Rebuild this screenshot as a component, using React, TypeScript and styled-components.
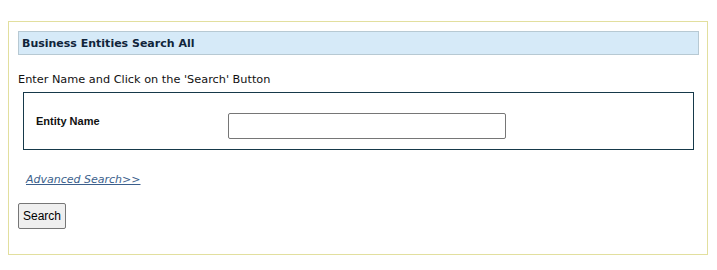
import styled, { createGlobalStyle } from "styled-components"

const GlobalStyle = createGlobalStyle`
    body {
        margin: 0;
        background: #ffffff;
        font-family: "DejaVu Sans", Verdana, sans-serif;
    }
`;

const App: React.FC = () => {
    return (
        <Page>
            <GlobalStyle />
            <Panel>
                <Header>Business Entities Search All</Header>
                <Instructions>Enter Name and Click on the 'Search' Button</Instructions>
                <SearchBox>
                    <Label>Entity Name</Label>
                    <NameInput type="text" />
                </SearchBox>
                <AdvancedLink href="#">Advanced Search&gt;&gt;</AdvancedLink>
                <SearchButton type="button">Search</SearchButton>
            </Panel>
        </Page>
    )
}

const Page = styled.div`
    padding: 21px 9px 0 8px;
`;

const Panel = styled.div`
    display: flex;
    flex-direction: column;
    align-items: flex-start;
    border: 1px solid #e2df9e;
    padding: 9px 8px 25px 9px;
    height: 198px;
`;

const Header = styled.div`
    box-sizing: border-box;
    align-self: stretch;
    height: 24px;
    padding: 0 3px;
    display: flex;
    align-items: center;
    background: #d6eaf8;
    border: 1px solid #b7c9d3;
    color: #10243a;
    font-size: 11px;
    font-weight: bold;
`;

const Instructions = styled.p`
    margin: 18px 0 0 0;
    font-size: 11.3px;
    color: #111;
`;

const SearchBox = styled.div`
    box-sizing: border-box;
    align-self: stretch;
    margin: 6px 5px 0 5px;
    height: 58px;
    display: flex;
    align-items: center;
    border: 1px solid #16394a;
    padding: 0 12px;
`;

const Label = styled.span`
    width: 192px;
    font-family: "Liberation Sans", Arial, sans-serif;
    font-size: 11px;
    font-weight: bold;
    color: #111;
`;

const NameInput = styled.input`
    box-sizing: border-box;
    width: 278px;
    height: 26px;
    margin-top: 10px;
    border: 1px solid #767676;
    border-radius: 2px;
    padding: 1px 2px;
`;

const AdvancedLink = styled.a`
    margin: 23px 0 0 8px;
    font-size: 11px;
    font-style: italic;
    color: #3c5f8c;
    text-decoration: underline;
`;

const SearchButton = styled.button`
    margin-top: 17px;
    height: 26px;
    padding: 0 4px;
    background: #efefef;
    border: 1px solid #767676;
    border-radius: 2px;
    font-family: "Liberation Sans", Arial, sans-serif;
    font-size: 12px;
    color: #000;
`;

export default App
